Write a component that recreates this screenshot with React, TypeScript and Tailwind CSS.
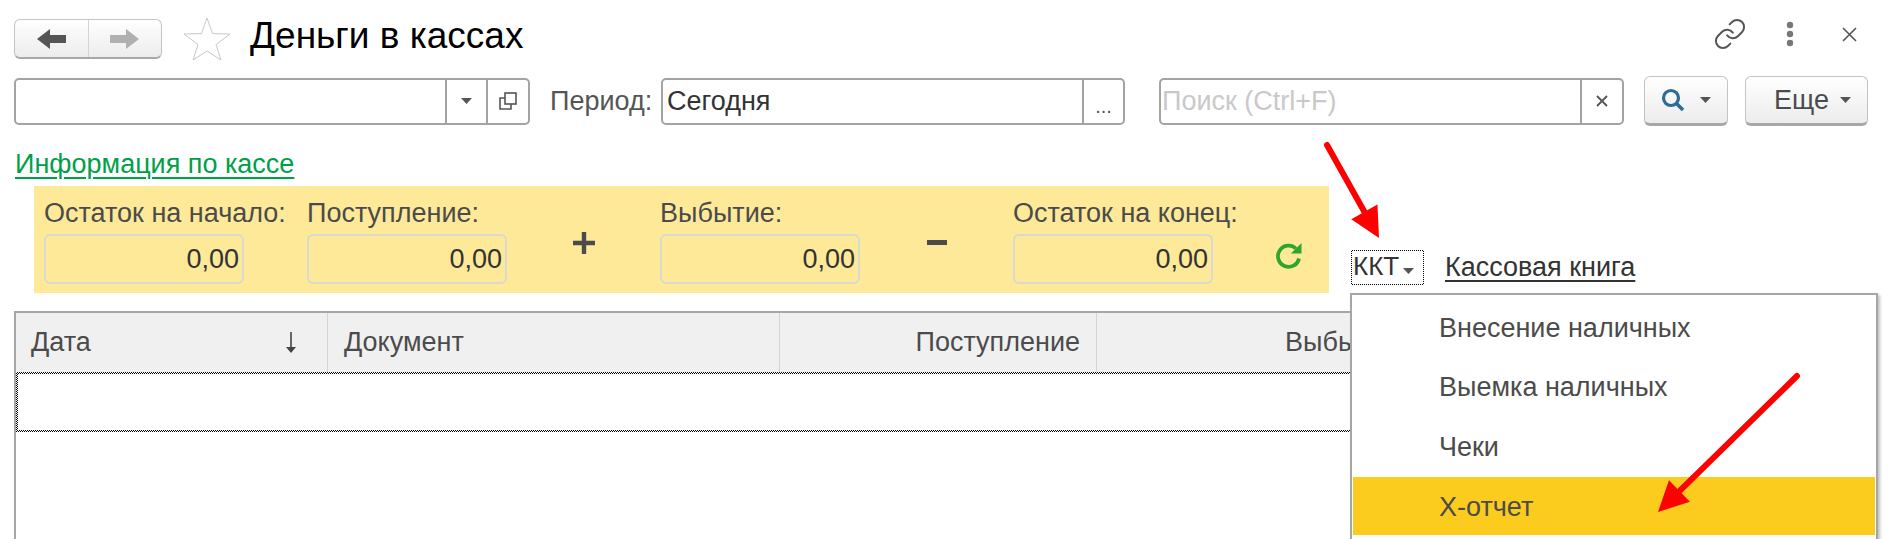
import React from "react";

const checker = "bg-[repeating-conic-gradient(#000_0_25%,#fff_0_50%)] bg-[length:2px_2px]";

function Caret({ className = "" }: { className?: string }) {
  return (
    <svg width="11" height="6" viewBox="0 0 11 6" className={className}>
      <polygon points="0,0 11,0 5.5,6" fill="#555" />
    </svg>
  );
}

function Field({ label, left }: { label: string; left: string }) {
  return (
    <div className={`flex flex-col w-[200px] ${left}`}>
      <div className="h-[36px] text-[27px] leading-[30px] text-[#4b4b4b] whitespace-nowrap">{label}</div>
      <div className="w-[200px] h-[50px] rounded-[6px] border-2 border-[#d9d9d0] flex items-center justify-end pr-[3px] text-[27px] text-[#333]">
        0,00
      </div>
    </div>
  );
}

function Arrow({ x1, y1, x2, y2 }: { x1: number; y1: number; x2: number; y2: number }) {
  const a = Math.atan2(y2 - y1, x2 - x1);
  const L = 30;
  const W = 15;
  const bx = x2 - L * Math.cos(a);
  const by = y2 - L * Math.sin(a);
  const px = -Math.sin(a);
  const py = Math.cos(a);
  return (
    <g>
      <line x1={x1} y1={y1} x2={bx} y2={by} stroke="#ff0000" strokeWidth="6" strokeLinecap="round" />
      <polygon points={`${x2},${y2} ${bx + px * W},${by + py * W} ${bx - px * W},${by - py * W}`} fill="#ff0000" />
    </g>
  );
}

export default function App() {
  return (
    <div className="relative w-[1891px] h-[539px] overflow-hidden bg-white font-['Liberation_Sans',Arial,sans-serif]">
      {/* Title row */}
      <div className="flex items-center h-[40px] mt-[19px] pl-[14px] pr-[34px]">
        <div className="flex w-[148px] h-[40px] rounded-[6px] border border-[#c4c4c4] border-b-[2px] border-b-[#a8a8a8] bg-gradient-to-b from-white to-[#ececec]">
          <div className="w-[74px] flex items-center justify-center border-r border-[#d4d4d4]">
            <svg width="30" height="24" viewBox="0 0 30 24">
              <polygon points="0,12 13,2 13,8 29,8 29,16 13,16 13,22" fill="#555" />
            </svg>
          </div>
          <div className="flex-1 flex items-center justify-center">
            <svg width="30" height="24" viewBox="0 0 30 24">
              <polygon points="29,12 16,2 16,8 0,8 0,16 16,16 16,22" fill="#b0b0b0" />
            </svg>
          </div>
        </div>
        <svg width="48" height="44" viewBox="0 0 48 44" className="ml-[21px]">
          <polygon points="24,1 29.6,16.6 47,17 33,27.6 38,43 24,34 10,43 15,27.6 1,17 18.4,16.6" fill="white" stroke="#c8c8c8" strokeWidth="1" />
        </svg>
        <div className="ml-[19px] mb-[6px] text-[37px] leading-[40px] text-black whitespace-nowrap">Деньги в кассах</div>
        <div className="ml-auto mb-[10px] flex items-center">
          <svg width="34" height="34" viewBox="0 0 24 24" fill="none" stroke="#555" strokeWidth="1.4" strokeLinecap="round" strokeLinejoin="round">
            <path d="M10 13a5 5 0 0 0 7.54.54l3-3a5 5 0 0 0-7.07-7.07l-1.72 1.71" />
            <path d="M14 11a5 5 0 0 0-7.54-.54l-3 3a5 5 0 0 0 7.07 7.07l1.71-1.71" />
          </svg>
          <svg width="8" height="26" viewBox="0 0 8 26" className="ml-[39px]">
            <circle cx="4" cy="4" r="3.2" fill="#777" />
            <circle cx="4" cy="13" r="3.2" fill="#777" />
            <circle cx="4" cy="22" r="3.2" fill="#777" />
          </svg>
          <svg width="15" height="15" viewBox="0 0 15 15" className="ml-[48px]">
            <path d="M1 1L14 14M14 1L1 14" stroke="#555" strokeWidth="1.6" />
          </svg>
        </div>
      </div>

      {/* Filter row */}
      <div className="flex items-center h-[50px] mt-[17px] pl-[14px]">
        <div className="flex w-[516px] h-[47px] rounded-[5px] border-2 border-[#a3a3a3]">
          <div className="flex-1" />
          <div className="w-[41px] flex items-center justify-center border-l-2 border-[#a3a3a3]">
            <Caret />
          </div>
          <div className="w-[42px] flex items-center justify-center border-l-2 border-[#a3a3a3]">
            <svg width="18" height="18" viewBox="0 0 18 18" fill="none" stroke="#555" strokeWidth="1.6">
              <rect x="6" y="1" width="11" height="11" />
              <path d="M6 6H1V17H12V12" />
            </svg>
          </div>
        </div>
        <div className="ml-[20px] text-[27px] text-[#555] whitespace-nowrap w-[111px]">Период:</div>
        <div className="flex w-[464px] h-[47px] rounded-[5px] border-2 border-[#a3a3a3]">
          <div className="flex-1 pl-[4px] flex items-center text-[27px] text-[#333]">Сегодня</div>
          <div className="w-[41px] flex items-end justify-center pb-[5px] border-l-2 border-[#a3a3a3] text-[20px] text-[#555] leading-[24px]">...</div>
        </div>
        <div className="flex ml-[34px] w-[465px] h-[47px] rounded-[5px] border-2 border-[#a3a3a3]">
          <div className="flex-1 pl-[1px] flex items-center text-[27px] text-[#c9c9c9]">Поиск (Ctrl+F)</div>
          <div className="w-[42px] flex items-center justify-center border-l-2 border-[#a3a3a3]">
            <svg width="12" height="12" viewBox="0 0 12 12">
              <path d="M1 1L11 11M11 1L1 11" stroke="#555" strokeWidth="1.8" />
            </svg>
          </div>
        </div>
        <div className="flex items-center ml-[20px] w-[84px] h-[50px] rounded-[6px] border border-[#c4c4c4] border-b-[3px] border-b-[#a8a8a8] bg-gradient-to-b from-white to-[#ececec] pl-[16px]">
          <svg width="24" height="24" viewBox="0 0 24 24" fill="none">
            <circle cx="10" cy="10" r="7.5" stroke="#2e6c96" strokeWidth="3.2" />
            <path d="M15.5 15.5L22 22" stroke="#2e6c96" strokeWidth="3.6" />
          </svg>
          <Caret className="ml-[15px]" />
        </div>
        <div className="flex items-center ml-[17px] w-[123px] h-[50px] rounded-[6px] border border-[#c4c4c4] border-b-[3px] border-b-[#a8a8a8] bg-gradient-to-b from-white to-[#ececec] pl-[28px]">
          <span className="text-[27px] text-[#4b4b4b]">Еще</span>
          <Caret className="ml-[11px]" />
        </div>
      </div>

      {/* Link */}
      <div className="mt-[23px] pl-[15px] h-[37px]">
        <span className="text-[27px] leading-[30px] text-[#00a04a] underline underline-offset-[4px] decoration-2">Информация по кассе</span>
      </div>

      {/* Totals and commands */}
      <div className="flex items-end">
        <div className="flex ml-[34px] w-[1295px] h-[107px] bg-[#fee998] pt-[12px] pl-[10px]">
          <Field label="Остаток на начало:" left="" />
          <Field label="Поступление:" left="ml-[63px]" />
          <div className="w-[153px] flex items-center justify-center h-[90px]">
            <svg width="24" height="24" viewBox="0 0 24 24"><path d="M12 1V23M1 12H23" stroke="#4b4b4b" strokeWidth="4.4" /></svg>
          </div>
          <Field label="Выбытие:" left="" />
          <div className="w-[153px] flex items-center justify-center h-[90px]">
            <svg width="20" height="6" viewBox="0 0 20 6"><rect width="20" height="5" fill="#4b4b4b" /></svg>
          </div>
          <Field label="Остаток на конец:" left="" />
          <div className="ml-[61px] h-[95px] pt-[43px]">
            <svg width="30" height="30" viewBox="0 0 24 24" fill="none" stroke="#2ea52e" strokeWidth="3">
              <path d="M20 14a8.5 8.5 0 1 1-2.5-8" />
              <polygon points="22,1.5 22,10 13.5,10" fill="#2ea52e" stroke="none" />
            </svg>
          </div>
        </div>
        <div className={`ml-[22px] mb-[8px] p-[1px] ${checker}`}>
          <div className="flex items-center w-[71px] h-[33px] bg-white pl-[1px] pb-[2px]">
            <span className="text-[26px] text-[#333]">ККТ</span>
            <Caret className="ml-[4px] mt-[8px]" />
          </div>
        </div>
        <div className="ml-[21px] mb-[10px] text-[27px] leading-[32px] text-[#333] underline underline-offset-[4px] decoration-2 whitespace-nowrap">Кассовая книга</div>
      </div>

      {/* Table */}
      <div className="mt-[18px] ml-[14px] w-[1850px] h-[228px] border-l-2 border-t-2 border-[#a6a6a6]">
        <div className="flex h-[59px] bg-[#f0f0f0] text-[27px] text-[#4b4b4b]">
          <div className="flex items-center justify-between w-[312px] pl-[15px] pr-[30px] border-r border-[#d4d4d4]">
            <span>Дата</span>
            <svg width="12" height="22" viewBox="0 0 12 22"><path d="M6 0V17" stroke="#444" strokeWidth="1.6" /><polygon points="1,15 11,15 6,21" fill="#444" /></svg>
          </div>
          <div className="flex items-center w-[452px] pl-[16px] border-r border-[#d4d4d4]">Документ</div>
          <div className="flex items-center justify-end w-[317px] pr-[16px] border-r border-[#d4d4d4]">Поступление</div>
          <div className="flex items-center w-[312px] pl-[188px]"><span className="whitespace-nowrap">Выбытие</span></div>
        </div>
        <div className={`h-[60px] p-[2px] ${checker}`}>
          <div className="h-full bg-white" />
        </div>
      </div>

      {/* Dropdown */}
      <div className="absolute left-[1350px] top-[293px] w-[528px] h-[260px] bg-white border-2 border-[#a6a6a6] shadow-[2px_2px_3px_rgba(0,0,0,0.25)] px-[1px] pt-[3px]">
        {["Внесение наличных", "Выемка наличных", "Чеки"].map((t) => (
          <div key={t} className="h-[59.5px] flex items-center pl-[86px] text-[27px] text-[#4b4b4b]">{t}</div>
        ))}
        <div className="h-[58px] flex items-center pl-[86px] pt-[3px] text-[27px] text-[#4b4b4b] bg-[#fbcc1e]">Х-отчет</div>
      </div>

      {/* Annotation arrows */}
      <svg className="absolute left-0 top-0 pointer-events-none" width="1891" height="539">
        <Arrow x1={1327} y1={145} x2={1379} y2={238} />
        <Arrow x1={1797} y1={376} x2={1658} y2={512} />
      </svg>
    </div>
  );
}
